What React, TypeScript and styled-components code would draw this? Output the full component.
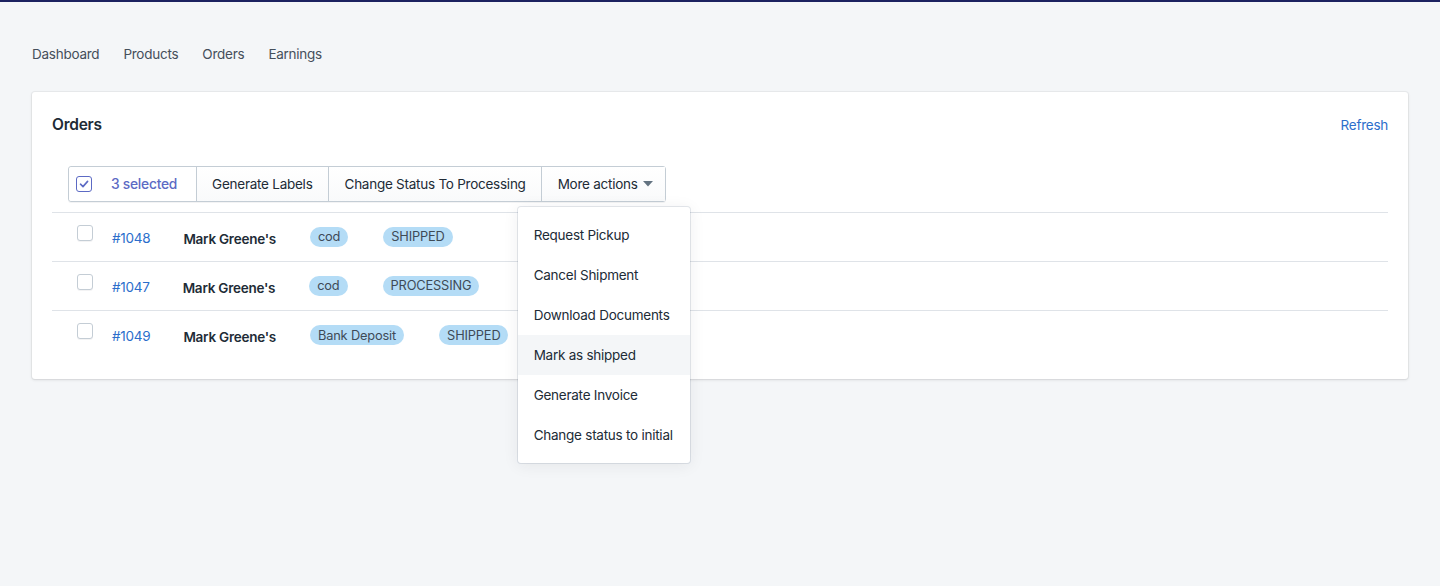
import React from "react";
import styled, { createGlobalStyle } from "styled-components";

const Global = createGlobalStyle`
  * { box-sizing: border-box; }
  html, body { margin: 0; padding: 0; }
  body {
    background: #f4f6f8;
    font-family: Inter, "Noto Sans", "Liberation Sans", sans-serif;
    color: #212b36;
    letter-spacing: -0.25px;
    -webkit-font-smoothing: antialiased;
  }
`;

const Page = styled.div`
  min-height: 586px;
  border-top: 2px solid #1c2260;
  padding: 0 32px;
`;

const Nav = styled.nav`
  display: flex;
  gap: 24px;
  height: 90px;
  align-items: center;
  padding-top: 14px;
`;

const NavLink = styled.a`
  font-size: 13.5px;
  color: #454f5b;
  text-decoration: none;
  line-height: 20px;
`;

const Card = styled.section`
  background: #fff;
  border-radius: 3px;
  box-shadow: 0 0 0 1px rgba(63, 63, 68, 0.05), 0 1px 3px 0 rgba(63, 63, 68, 0.15);
  padding: 21px 20px 19px;
`;

const CardHeader = styled.div`
  display: flex;
  justify-content: space-between;
  align-items: center;
  height: 24px;
`;

const Title = styled.h2`
  margin: 0;
  font-size: 15.5px;
  font-weight: 600;
  line-height: 24px;
  color: #212b36;
`;

const TextLink = styled.a`
  font-size: 13.5px;
  color: #2c6ecb;
  text-decoration: none;
`;

const BulkWrap = styled.div`
  position: relative;
  margin-top: 29px;
  padding: 0 0 10px 16px;
  border-bottom: 1px solid #dfe3e8;
`;

const BulkBar = styled.div`
  display: inline-flex;
  position: relative;
  height: 36px;
  border: 1px solid #c4cdd5;
  border-radius: 3px;
  box-shadow: 0 1px 0 0 rgba(22, 29, 37, 0.05);
`;

const SelectSection = styled.div`
  display: flex;
  align-items: center;
  padding: 0 19px 0 7px;
  gap: 19px;
  background: #fff;
  border-radius: 3px 0 0 3px;
`;

const Count = styled.span`
  font-size: 13.8px;
  font-weight: 500;
  color: #5c6ac4;
`;

const BarButton = styled.button<{ $pl?: number; $pr?: number }>`
  display: flex;
  align-items: center;
  gap: 5px;
  border: 0;
  border-left: 1px solid #c4cdd5;
  padding: 0 ${(p) => p.$pr ?? 16}px 0 ${(p) => p.$pl ?? 16}px;
  background: linear-gradient(180deg, #fff, #f9fafb);
  font-family: inherit;
  letter-spacing: inherit;
  font-size: 13.5px;
  color: #212b36;
  cursor: pointer;
`;

const Box = styled.span<{ $checked?: boolean }>`
  display: inline-flex;
  align-items: center;
  justify-content: center;
  width: 16px;
  height: 16px;
  border-radius: 3px;
  background: #fff;
  border: 1px solid ${(p) => (p.$checked ? "#5c6ac4" : "#c4cdd5")};
  box-shadow: ${(p) => (p.$checked ? "none" : "0 1px 0 0 rgba(22,29,37,0.05)")};
  flex: none;
`;

const MenuAnchor = styled.div`
  position: relative;
  display: flex;
`;

const Menu = styled.ul`
  position: absolute;
  top: 40px;
  left: -23px;
  width: 172px;
  margin: 0;
  padding: 8px 0;
  list-style: none;
  background: #fff;
  border-radius: 3px;
  box-shadow: 0 0 0 1px rgba(6, 44, 82, 0.1), 0 2px 16px rgba(33, 43, 54, 0.08);
  z-index: 10;
`;

const MenuItem = styled.li<{ $active?: boolean }>`
  height: 40px;
  display: flex;
  align-items: center;
  padding: 0 16px;
  font-size: 13.5px;
  color: #212b36;
  white-space: nowrap;
  background: ${(p) => (p.$active ? "#f4f6f8" : "transparent")};
`;

const Row = styled.div`
  display: flex;
  align-items: center;
  height: 49px;
  padding: 1px 0 0 25px;
  border-bottom: 1px solid #dfe3e8;
  &:last-child { border-bottom: 0; }
`;

const RowBox = styled.div`
  align-self: flex-start;
  margin-top: 11px;
  margin-right: 19px;
  display: flex;
`;

const OrderId = styled.a`
  font-size: 13.5px;
  color: #2c6ecb;
  text-decoration: none;
  margin-right: 33px;
`;

const Name = styled.span`
  font-size: 13.5px;
  font-weight: 600;
  color: #212b36;
  margin-right: 34px;
  margin-top: 2px;
`;

const Badge = styled.span`
  display: inline-flex;
  align-items: center;
  height: 20px;
  padding: 0 8px;
  border-radius: 10px;
  background: #b4dcf6;
  color: #3e4a56;
  font-size: 12.8px;
  letter-spacing: -0.15px;
  margin-right: 35px;
  margin-top: -2px;
`;

const Check = () => (
  <svg width="12" height="12" viewBox="0 0 12 12" fill="none">
    <path d="M2.5 6.2 5 8.6 9.6 3.4" stroke="#5c6ac4" strokeWidth="1.6" strokeLinecap="round" strokeLinejoin="round" />
  </svg>
);

const Caret = () => (
  <svg width="10" height="6" viewBox="0 0 10 6">
    <path d="M0 0h10L5 5.5z" fill="#637381" />
  </svg>
);

const orders = [
  { id: "#1048", name: "Mark Greene's", pay: "cod", status: "SHIPPED" },
  { id: "#1047", name: "Mark Greene's", pay: "cod", status: "PROCESSING" },
  { id: "#1049", name: "Mark Greene's", pay: "Bank Deposit", status: "SHIPPED" },
];

const actions = [
  "Request Pickup",
  "Cancel Shipment",
  "Download Documents",
  "Mark as shipped",
  "Generate Invoice",
  "Change status to initial",
];

export default function App() {
  return (
    <>
      <Global />
      <Page>
        <Nav>
          <NavLink>Dashboard</NavLink>
          <NavLink>Products</NavLink>
          <NavLink>Orders</NavLink>
          <NavLink>Earnings</NavLink>
        </Nav>
        <Card>
          <CardHeader>
            <Title>Orders</Title>
            <TextLink>Refresh</TextLink>
          </CardHeader>
          <BulkWrap>
            <BulkBar>
              <SelectSection>
                <Box $checked>
                  <Check />
                </Box>
                <Count>3 selected</Count>
              </SelectSection>
              <BarButton $pl={15} $pr={15}>Generate Labels</BarButton>
              <BarButton $pr={15}>Change Status To Processing</BarButton>
              <MenuAnchor>
                <BarButton $pr={12}>
                  More actions <Caret />
                </BarButton>
                <Menu>
                  {actions.map((a, i) => (
                    <MenuItem key={a} $active={i === 3}>
                      {a}
                    </MenuItem>
                  ))}
                </Menu>
              </MenuAnchor>
            </BulkBar>
          </BulkWrap>
          {orders.map((o) => (
            <Row key={o.id}>
              <RowBox>
                <Box />
              </RowBox>
              <OrderId>{o.id}</OrderId>
              <Name>{o.name}</Name>
              <Badge>{o.pay}</Badge>
              <Badge>{o.status}</Badge>
            </Row>
          ))}
        </Card>
      </Page>
    </>
  );
}
